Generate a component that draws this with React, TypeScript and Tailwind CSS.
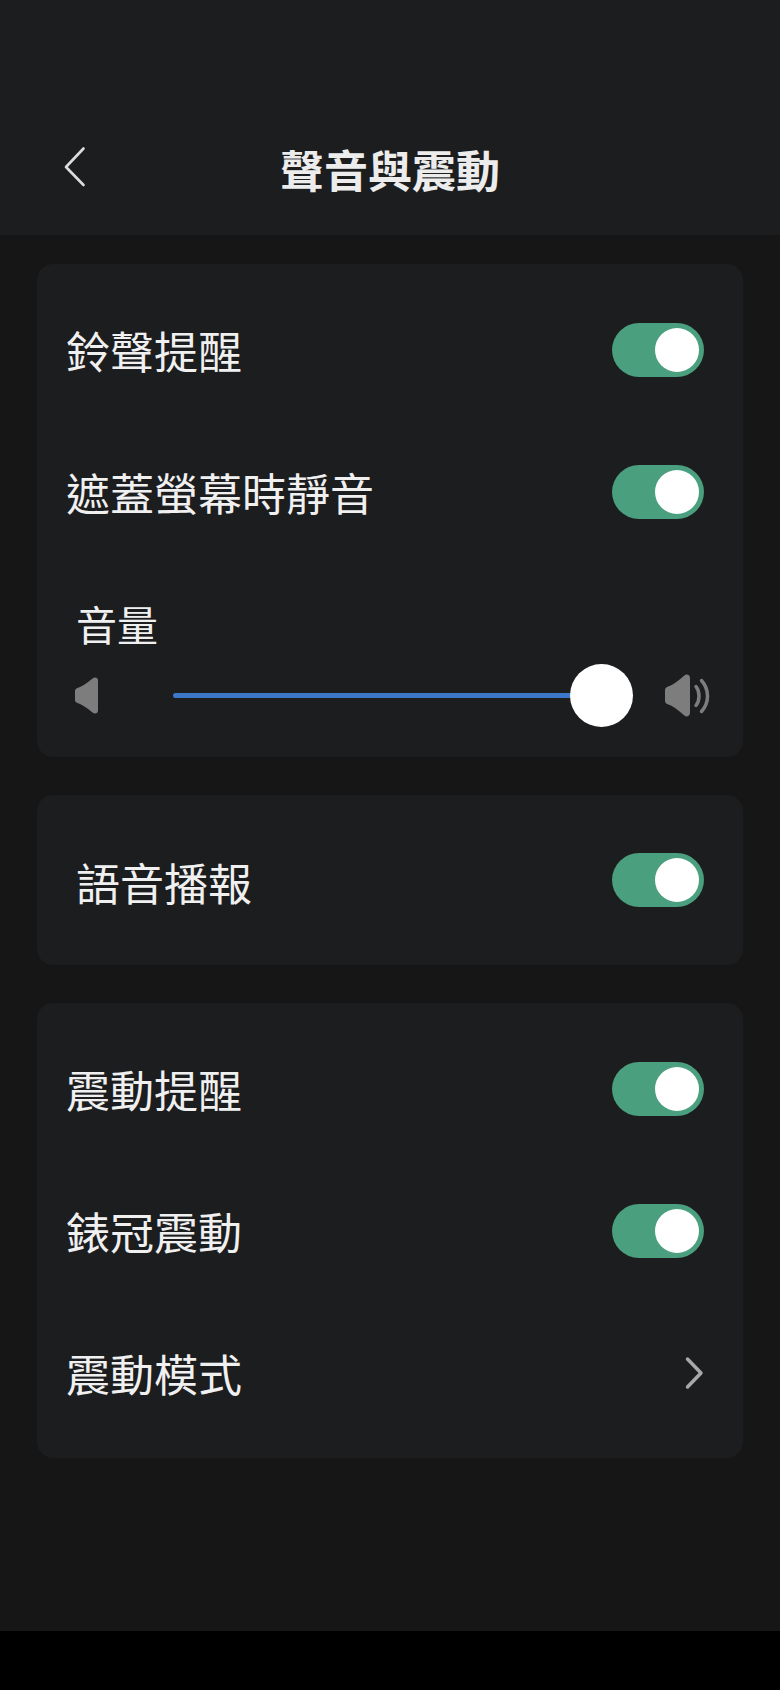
import React from 'react';

const Toggle: React.FC = () => (
  <div className="flex h-[54px] w-[92px] shrink-0 items-center justify-end rounded-full bg-[#4a9f7e] pr-[5px]">
    <div className="h-[44px] w-[44px] rounded-full bg-white" />
  </div>
);

interface RowProps {
  label: string;
  indent?: boolean;
  children: React.ReactNode;
}

const Row: React.FC<RowProps> = ({ label, indent, children }) => (
  <div className="flex h-[142px] items-center justify-between pr-[39px]">
    <span className={`${indent ? 'pl-[39px] pt-[4px]' : 'pl-[29px]'} text-[44px] leading-none text-[#f0f0f0]`}>{label}</span>
    {children}
  </div>
);

const SpeakerBody = () => (
  <path d="M2.500 11Q8 9.500 17.500 1.500C20 -.5 23 .5 23 3.500V33.500C23 36.500 20 37.500 17.500 35.500Q8 27.500 2.500 26C1 25.500 0 24.500 0 23V14C0 12.500 1 11.500 2.500 11Z" fill="#7d7d7d" />
);

const App: React.FC = () => {
  return (
    <div className="flex h-[1690px] w-[780px] flex-col bg-black font-['Noto_Sans_CJK_TC',sans-serif]">
      <div className="flex h-[1631px] flex-col bg-[#161616]">
        {/* Header */}
        <header className="relative flex h-[235px] shrink-0 items-end justify-center bg-[#1c1d1f] pb-[40px]">
          <svg className="absolute left-[62px] top-[146px]" width="24" height="41" viewBox="0 0 24 41" fill="none">
            <path d="M21.500 2.500 4 21l17.500 18" stroke="#dcdcdc" strokeWidth="2.600" strokeLinecap="round" strokeLinejoin="round" />
          </svg>
          <h1 className="text-[44px] font-bold leading-[52px] text-[#ececec]">聲音與震動</h1>
        </header>

        <main className="flex flex-col gap-[38px] px-[37px] pt-[29px]">
          <section className="flex h-[493px] flex-col rounded-[16px] bg-[#1c1d1f] pt-[15px]">
            <Row label="鈴聲提醒"><Toggle /></Row>
            <Row label="遮蓋螢幕時靜音"><Toggle /></Row>

            <div className="pl-[39px] pt-[36px] text-[41px] leading-[48px] text-[#f0f0f0]">音量</div>
            <div className="flex items-center pl-[38px] pt-[17px]">
              <svg width="23" height="37" viewBox="0 0 23 37" className="shrink-0">
                <SpeakerBody />
              </svg>
              <div className="ml-[75px] h-[5px] w-[400px] rounded-full bg-[#3b78c9]" />
              <div className="-ml-[3px] h-[63px] w-[63px] shrink-0 rounded-full bg-white" />
              <svg width="46" height="44" viewBox="0 0 46 44" fill="none" className="ml-[32px] shrink-0">
                <g transform="scale(1.087 1.160)"><SpeakerBody /></g>
                <path d="M31 12.500c4 5 4 14 0 19" stroke="#7d7d7d" strokeWidth="3.500" strokeLinecap="round" />
                <path d="M36.500 6.500c8 9 8 22 0 31" stroke="#7d7d7d" strokeWidth="3.500" strokeLinecap="round" />
              </svg>
            </div>
          </section>

          <section className="flex h-[170px] flex-col justify-center rounded-[16px] bg-[#1c1d1f]">
            <Row label="語音播報" indent><Toggle /></Row>
          </section>

          <section className="flex h-[455px] flex-col rounded-[16px] bg-[#1c1d1f] pt-[15px]">
            <Row label="震動提醒"><Toggle /></Row>
            <Row label="錶冠震動"><Toggle /></Row>
            <Row label="震動模式">
              <svg width="20" height="34" viewBox="0 0 20 34" fill="none">
                <path d="M3.500 3 17 17 3.500 31" stroke="#a8a8a8" strokeWidth="3.500" strokeLinecap="round" strokeLinejoin="round" />
              </svg>
            </Row>
          </section>
        </main>
      </div>
    </div>
  );
};

export default App;
